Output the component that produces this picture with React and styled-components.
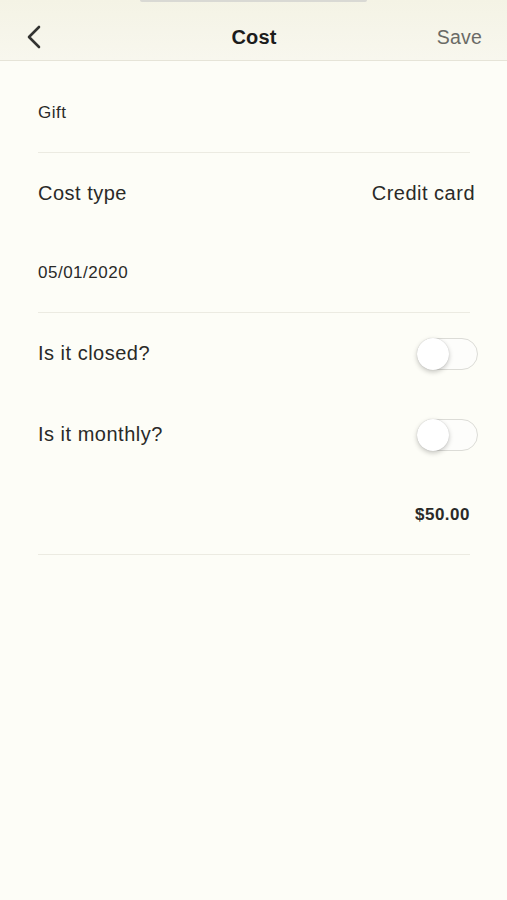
import styled, { createGlobalStyle } from "styled-components";

const GlobalStyle = createGlobalStyle`
  html, body {
    margin: 0;
    padding: 0;
    background: #fdfdf7;
  }
  body {
    font-family: "Liberation Sans", Arial, sans-serif;
    -webkit-font-smoothing: antialiased;
  }
`;

const Screen = styled.div`
  min-height: 900px;
  background: #fdfdf7;
  display: flex;
  flex-direction: column;
`;

const Header = styled.header`
  position: relative;
  height: 61px;
  box-sizing: border-box;
  padding: 14px 25px 0 26px;
  background: linear-gradient(#f4f3e5, #f8f7ee);
  border-bottom: 1px solid #e6e4d8;
  display: grid;
  grid-template-columns: 1fr auto 1fr;
  align-items: center;
`;

const Notch = styled.div`
  position: absolute;
  top: 0;
  left: 140px;
  width: 227px;
  height: 2px;
  border-radius: 0 0 3px 3px;
  background: #d9d9d4;
`;

const BackButton = styled.button`
  justify-self: start;
  border: none;
  background: none;
  padding: 0;
  display: flex;
  cursor: pointer;
`;

const Title = styled.h1`
  margin: 0;
  font-size: 20px;
  font-weight: 700;
  color: #1c1c1c;
  letter-spacing: 0.2px;
`;

const SaveButton = styled.button`
  justify-self: end;
  border: none;
  background: none;
  padding: 0;
  font-family: inherit;
  font-size: 19.5px;
  color: #6a6a66;
  letter-spacing: 0.2px;
  cursor: pointer;
`;

const Form = styled.main`
  padding: 12px 37px 0 38px;
  display: flex;
  flex-direction: column;
`;

const Row = styled.div`
  height: ${({ $tall }) => ($tall ? "81px" : "80px")};
  box-sizing: border-box;
  display: flex;
  align-items: center;
  justify-content: space-between;
  border-bottom: ${({ $divider }) => ($divider ? "1px solid #ecebe2" : "none")};
`;

const Label = styled.span`
  font-size: ${({ $small }) => ($small ? "17px" : "20px")};
  letter-spacing: 0.5px;
  color: #2a2a28;
`;

const Value = styled.span`
  font-size: ${({ $small }) => ($small ? "17px" : "20px")};
  font-weight: ${({ $bold }) => ($bold ? 700 : 400)};
  letter-spacing: 0.5px;
  color: #2a2a28;
  margin-left: auto;
  margin-right: ${({ $push }) => $push || "0px"};
`;

const Track = styled.span`
  width: 61px;
  height: 32px;
  box-sizing: border-box;
  margin-right: -8px;
  border: 1.5px solid #dcdcd7;
  border-radius: 16px;
  background: #fdfdfb;
  display: flex;
  align-items: center;
  justify-content: ${({ $on }) => ($on ? "flex-end" : "flex-start")};
`;

const Knob = styled.span`
  width: 32px;
  height: 32px;
  margin: 0 -1.5px;
  flex: none;
  border-radius: 50%;
  background: #ffffff;
  box-shadow: 0 2px 5px rgba(0, 0, 0, 0.22), 0 0 1px rgba(0, 0, 0, 0.2);
`;

const Toggle = ({ on = false }) => (
  <Track role="switch" aria-checked={on} $on={on}>
    <Knob />
  </Track>
);

const ChevronLeft = () => (
  <svg width="16" height="24" viewBox="0 0 16 24" fill="none">
    <path
      d="M13 2 L3 12 L13 22"
      stroke="#333331"
      strokeWidth="2.6"
      strokeLinecap="round"
      strokeLinejoin="round"
    />
  </svg>
);

export default function App() {
  return (
    <>
      <GlobalStyle />
      <Screen>
        <Header>
          <Notch />
          <BackButton aria-label="Back">
            <ChevronLeft />
          </BackButton>
          <Title>Cost</Title>
          <SaveButton>Save</SaveButton>
        </Header>

        <Form>
          <Row $divider>
            <Label $small>Gift</Label>
          </Row>
          <Row>
            <Label>Cost type</Label>
            <Value $push="-5px">Credit card</Value>
          </Row>
          <Row $divider>
            <Label $small>05/01/2020</Label>
          </Row>
          <Row $tall>
            <Label>Is it closed?</Label>
            <Toggle />
          </Row>
          <Row $tall>
            <Label>Is it monthly?</Label>
            <Toggle />
          </Row>
          <Row $divider>
            <Value $small $bold>$50.00</Value>
          </Row>
        </Form>
      </Screen>
    </>
  );
}
